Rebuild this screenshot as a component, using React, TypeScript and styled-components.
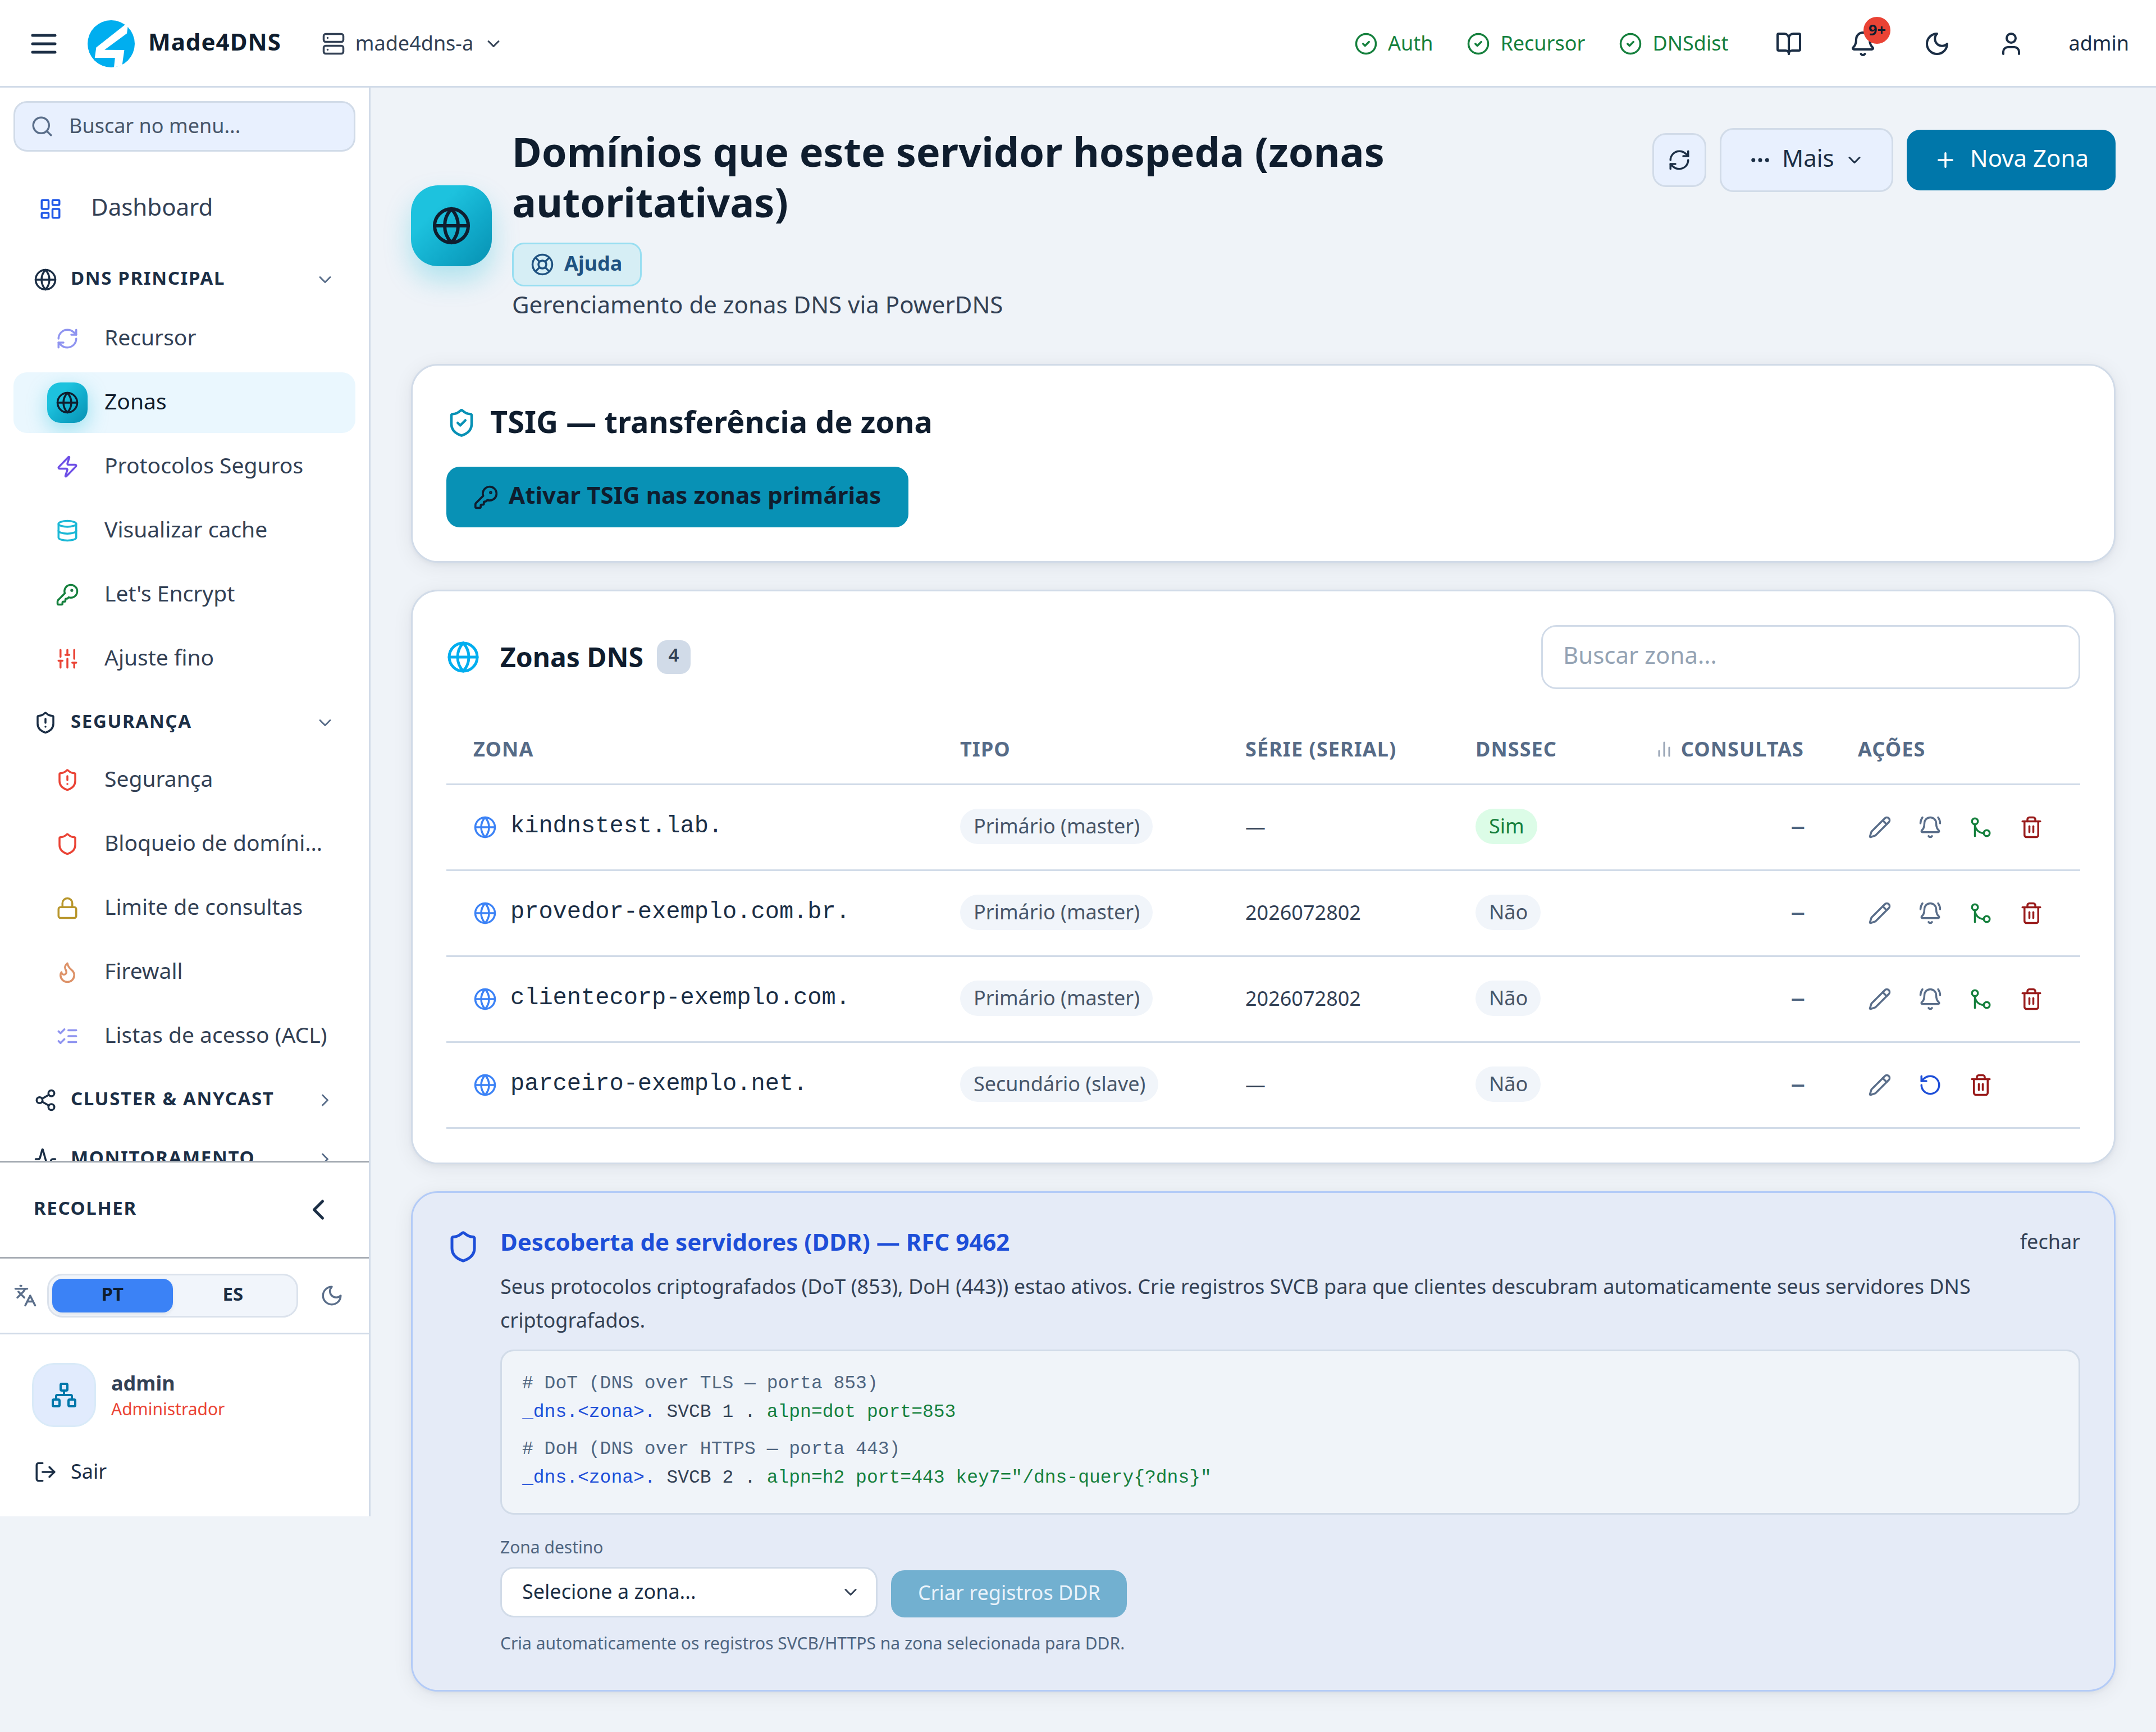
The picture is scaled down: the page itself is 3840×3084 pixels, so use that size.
import React from "react";
import styled, { createGlobalStyle, css } from "styled-components";
import {
    Activity,
    Bell,
    BellRing,
    BookOpen,
    ChevronDown,
    ChevronLeft,
    ChevronRight,
    CircleCheck,
    Database,
    Ellipsis,
    GitMerge,
    Globe,
    KeyRound,
    Languages,
    LayoutDashboard,
    LifeBuoy,
    Lock,
    LogOut,
    Network,
    Pencil,
    Plus,
    RefreshCw,
    RotateCcw,
    Search,
    Server,
    Share2,
    Shield,
    ShieldAlert,
    ShieldCheck,
    SlidersVertical,
    Trash2,
    User,
    Zap,
} from "lucide-react";

const sans = `"Noto Sans", sans-serif`;
const mono = `"Liberation Mono", monospace`;

const ink = "#0f1d2e";
const inkSoft = "#1b2e45";
const text = "#334155";
const muted = "#5a6e8a";
const label = "#4f6580";
const line = "#d1dbe8";
const page = "#eff3f8";
const tint = "#e8f0fe";
const green = "#15803d";
const red = "#ea4335";
const blue = "#1d4ed8";

const GlobalStyle = createGlobalStyle`
    *, *::before, *::after { box-sizing: border-box; }
    body {
        margin: 0;
        background: ${page};
        color: ${text};
        font-family: ${sans};
        font-size: 36px;
    }
    svg { display: block; flex-shrink: 0; }
    h1, h2, h3, p { margin: 0; }
    button, input { font-family: inherit; }
`;

// ---------------------------------------------------------------- icons

interface GlyphProps {
    size: number;
    color?: string;
}

function glyph(...paths: string[]) {
    return function Glyph({ size, color = "currentColor" }: GlyphProps): JSX.Element {
        return (
            <svg
                width={size}
                height={size}
                viewBox="0 0 24 24"
                fill="none"
                stroke={color}
                strokeWidth={2}
                strokeLinecap="round"
                strokeLinejoin="round"
            >
                {paths.map((d) => (
                    <path key={d} d={d} />
                ))}
            </svg>
        );
    };
}

const MenuIcon = glyph("M4 6h16", "M4 12h16", "M4 18h16");
const MoonIcon = glyph("M12 3a6 6 0 0 0 9 9 9 9 0 1 1-9-9Z");
const BarsIcon = glyph("M18 20V10", "M12 20V4", "M6 20v-6");
const ChecksIcon = glyph("m3 17 2 2 4-4", "m3 7 2 2 4-4", "M13 6h8", "M13 12h8", "M13 18h8");
const FlameIcon = glyph(
    "M8.5 14.5A2.5 2.5 0 0 0 11 12c0-1.38-.5-2-1-3-1.072-2.143-.224-4.054 2-6 .5 2.5 2 4.9 4 6.5 2 1.6 3 3.5 3 5.5a7 7 0 1 1-14 0c0-1.153.433-2.294 1-3a2.5 2.5 0 0 0 2.5 2.5z"
);

function Logo(): JSX.Element {
    return (
        <svg width={84} height={84} viewBox="0 0 84 84">
            <circle cx={42} cy={42} r={42} fill="#00aeef" />
            <path
                d="M66.8 7.9 L71.6 11.6 L70 23.4 L30.2 52.8 L65.4 53 L61.6 80 L47 84 L48.8 67 L12.8 67 L15.4 48.4 Z"
                fill="#fff"
            />
        </svg>
    );
}

type IconType = React.ComponentType<any>;

// ---------------------------------------------------------------- text

// caption that sits a bit above the optical middle of its row
const Caption = styled.span<{ $size: number; $lift?: number; $weight?: number; $color?: string; $spacing?: string }>`
    padding-bottom: ${(p) => (p.$lift || 0) * 2}px;
    font-size: ${(p) => p.$size}px;
    font-weight: ${(p) => p.$weight || 400};
    line-height: 1.4;
    white-space: nowrap;
    ${(p) => p.$color && `color: ${p.$color};`}
    ${(p) => p.$spacing && `letter-spacing: ${p.$spacing};`}
`;

// ---------------------------------------------------------------- top bar

const TopBar = styled.header`
    display: flex;
    align-items: center;
    height: 156px;
    padding: 3px 48px 0;
    background: #fff;
    border-bottom: 3px solid ${line};
    color: ${inkSoft};
`;

const Brand = styled.div`
    display: flex;
    align-items: center;
    gap: 24px;
    margin-left: 48px;
`;

const ServerPicker = styled.div`
    display: flex;
    align-items: center;
    gap: 18px;
    margin-left: 72px;
    color: ${text};
`;

const Services = styled.div`
    display: flex;
    gap: 60px;
    margin-left: auto;
    margin-right: 60px;
    color: ${green};
`;

const Service = styled.div`
    display: flex;
    align-items: center;
    gap: 18px;
`;

const BarButtons = styled.div`
    display: flex;
    gap: 36px;
    margin-right: 54px;
`;

const BarButton = styled.div`
    position: relative;
    padding: 24px;
`;

const Counter = styled.span`
    position: absolute;
    top: 0;
    right: -1px;
    display: flex;
    align-items: center;
    justify-content: center;
    width: 48px;
    height: 48px;
    padding-bottom: 4px;
    border-radius: 24px;
    background: ${red};
    color: ${ink};
    font-size: 27px;
    font-weight: 700;
    line-height: 1;
`;

function Header(): JSX.Element {
    return (
        <TopBar>
            <MenuIcon size={60} />
            <Brand>
                <Logo />
                <Caption $size={42} $weight={700} $lift={4} $color={ink} $spacing="0.025em">
                    Made4DNS
                </Caption>
            </Brand>
            <ServerPicker>
                <Server size={42} />
                <Caption $size={36} $lift={1}>
                    made4dns-a
                </Caption>
                <ChevronDown size={36} />
            </ServerPicker>
            <Services>
                {["Auth", "Recursor", "DNSdist"].map((name) => (
                    <Service key={name}>
                        <CircleCheck size={42} />
                        <Caption $size={36} $lift={1}>
                            {name}
                        </Caption>
                    </Service>
                ))}
            </Services>
            <BarButtons>
                <BarButton>
                    <BookOpen size={48} />
                </BarButton>
                <BarButton>
                    <Bell size={48} />
                    <Counter>9+</Counter>
                </BarButton>
                <BarButton>
                    <MoonIcon size={48} />
                </BarButton>
                <BarButton>
                    <User size={48} />
                </BarButton>
            </BarButtons>
            <Caption $size={36} $lift={1}>
                admin
            </Caption>
        </TopBar>
    );
}

// ---------------------------------------------------------------- sidebar

interface NavEntry {
    name: string;
    icon: IconType;
    color: string;
    active?: boolean;
}

interface NavGroup {
    name: string;
    icon: IconType;
    entries?: NavEntry[];
}

const groups: NavGroup[] = [
    {
        name: "DNS PRINCIPAL",
        icon: Globe,
        entries: [
            { name: "Recursor", icon: RefreshCw, color: "#8f94f0" },
            { name: "Zonas", icon: Globe, color: ink, active: true },
            { name: "Protocolos Seguros", icon: Zap, color: "#6d4ee6" },
            { name: "Visualizar cache", icon: Database, color: "#1bb8d6" },
            { name: "Let's Encrypt", icon: KeyRound, color: green },
            { name: "Ajuste fino", icon: SlidersVertical, color: red },
        ],
    },
    {
        name: "SEGURANÇA",
        icon: ShieldAlert,
        entries: [
            { name: "Segurança", icon: ShieldAlert, color: red },
            { name: "Bloqueio de domínios", icon: Shield, color: red },
            { name: "Limite de consultas", icon: Lock, color: "#b8962b" },
            { name: "Firewall", icon: FlameIcon, color: "#dd9268" },
            { name: "Listas de acesso (ACL)", icon: ChecksIcon, color: "#8f94f0" },
        ],
    },
    { name: "CLUSTER & ANYCAST", icon: Share2 },
    { name: "MONITORAMENTO", icon: Activity },
];

const SideBar = styled.aside`
    display: flex;
    flex-direction: column;
    flex-shrink: 0;
    width: 660px;
    height: 2544px;
    background: #fff;
    border-right: 3px solid ${line};
`;

const MenuSearch = styled.div`
    display: flex;
    align-items: center;
    gap: 27px;
    flex-shrink: 0;
    height: 90px;
    margin: 24px 24px 0;
    padding: 0 27px;
    border: 3px solid ${line};
    border-radius: 24px;
    background: ${tint};
    color: ${muted};
`;

const Nav = styled.nav`
    flex: 1;
    min-height: 0;
    overflow: hidden;
    padding: 48px 24px 0;
`;

const NavRow = styled.div<{ $active?: boolean; $top?: boolean }>`
    display: flex;
    align-items: center;
    gap: ${(p) => (p.$top ? 36 : 30)}px;
    height: 108px;
    padding-left: ${(p) => (p.$top ? 30 : 60)}px;
    padding-right: 48px;
    border-radius: 24px;
    overflow: hidden;
    background: ${(p) => (p.$active ? "#eaf7fe" : "transparent")};
    color: ${(p) => (p.$active ? ink : text)};

    ${Caption} {
        min-width: 0;
        overflow: hidden;
        text-overflow: ellipsis;
    }
`;

const gradient = css`
    background: linear-gradient(135deg, #1dc2de 30%, #10a9c9 65%, #0891b2);
`;

const NavIcon = styled.div<{ $active?: boolean }>`
    display: flex;
    align-items: center;
    justify-content: center;
    flex-shrink: 0;
    width: 72px;
    height: 72px;
    border-radius: 24px;
    ${(p) =>
        p.$active &&
        css`
            ${gradient}
            box-shadow: 0 12px 36px rgba(6, 182, 212, 0.35);
        `}
`;

const GroupHead = styled.div`
    display: flex;
    align-items: center;
    gap: 24px;
    height: 90px;
    margin-top: 15px;
    padding: 0 36px;
    color: ${inkSoft};

    ${Caption} {
        flex: 1;
    }
`;

const Entries = styled.div<{ $first: boolean }>`
    display: flex;
    flex-direction: column;
    gap: 6px;
    margin-top: ${(p) => (p.$first ? 6 : 3)}px;
`;

const TopEntry = styled.div`
    margin-bottom: 27px;

    & + ${GroupHead} {
        margin-top: 0;
    }
`;

const Collapse = styled.div`
    display: flex;
    align-items: center;
    justify-content: space-between;
    flex-shrink: 0;
    height: 174px;
    padding: 0 60px;
    border-top: 3px solid #a5abb3;
    border-bottom: 3px solid #a5abb3;
    color: ${inkSoft};
`;

const Preferences = styled.div`
    display: flex;
    align-items: center;
    gap: 18px;
    flex-shrink: 0;
    height: 135px;
    padding: 0 24px;
    border-bottom: 3px solid ${line};
    color: ${muted};
`;

const LanguageSwitch = styled.div`
    display: flex;
    width: 447px;
    height: 78px;
    padding: 6px;
    border: 3px solid #dbe2ec;
    border-radius: 27px;
    background: #f1f5fb;
`;

const Language = styled.div<{ $on?: boolean }>`
    display: flex;
    align-items: center;
    justify-content: center;
    width: 216px;
    border-radius: 18px;
    color: ${(p) => (p.$on ? ink : inkSoft)};
    background: ${(p) => (p.$on ? "#3b82f6" : "transparent")};
    box-shadow: ${(p) => (p.$on ? "0 3px 6px rgba(15, 23, 42, 0.08)" : "none")};
`;

const ThemeButton = styled.div`
    padding: 21px;
`;

const Account = styled.div`
    display: flex;
    flex-direction: column;
    gap: 54px;
    flex: 0 0 324px;
    padding: 51px 57px 0;
    color: ${inkSoft};
`;

const Profile = styled.div`
    display: flex;
    align-items: center;
    gap: 27px;
`;

const Avatar = styled.div`
    display: flex;
    align-items: center;
    justify-content: center;
    width: 114px;
    height: 114px;
    border: 3px solid #d9eaf8;
    border-radius: 39px;
    background: #e1ebfd;
    color: #0077aa;
`;

const Who = styled.div`
    display: flex;
    flex-direction: column;
`;

const SignOut = styled.div`
    display: flex;
    align-items: center;
    gap: 24px;
    padding-left: 3px;
`;

function Entry({ name, icon: Icon, color, active }: NavEntry): JSX.Element {
    return (
        <NavRow $active={active}>
            <NavIcon $active={active}>
                <Icon size={42} color={color} />
            </NavIcon>
            <Caption $size={39} $lift={2.5}>
                {name}
            </Caption>
        </NavRow>
    );
}

function Group({ group, first }: { group: NavGroup; first: boolean }): JSX.Element {
    const Icon = group.icon;
    const Chevron = group.entries ? ChevronDown : ChevronRight;
    return (
        <>
            <GroupHead>
                <Icon size={42} />
                <Caption $size={33} $weight={700} $lift={2.5} $spacing="0.05em">
                    {group.name}
                </Caption>
                <Chevron size={36} color={muted} />
            </GroupHead>
            {group.entries && (
                <Entries $first={first}>
                    {group.entries.map((entry) => (
                        <Entry key={entry.name} {...entry} />
                    ))}
                </Entries>
            )}
        </>
    );
}

function Side(): JSX.Element {
    return (
        <SideBar>
            <MenuSearch>
                <Search size={42} />
                <Caption $size={36} $lift={1} $color="#475569">
                    Buscar no menu...
                </Caption>
            </MenuSearch>
            <Nav>
                <TopEntry>
                    <NavRow $top>
                        <NavIcon>
                            <LayoutDashboard size={42} color="#2159e8" />
                        </NavIcon>
                        <Caption $size={42} $lift={3.5}>
                            Dashboard
                        </Caption>
                    </NavRow>
                </TopEntry>
                {groups.map((group, i) => (
                    <Group key={group.name} group={group} first={i === 0} />
                ))}
            </Nav>
            <Collapse>
                <Caption $size={33} $weight={700} $lift={2.5} $spacing="0.05em">
                    RECOLHER
                </Caption>
                <ChevronLeft size={60} />
            </Collapse>
            <Preferences>
                <Languages size={42} />
                <LanguageSwitch>
                    <Language $on>
                        <Caption $size={33} $weight={700} $lift={3}>
                            PT
                        </Caption>
                    </Language>
                    <Language>
                        <Caption $size={33} $weight={700} $lift={3}>
                            ES
                        </Caption>
                    </Language>
                </LanguageSwitch>
                <ThemeButton>
                    <MoonIcon size={42} />
                </ThemeButton>
            </Preferences>
            <Account>
                <Profile>
                    <Avatar>
                        <Network size={48} />
                    </Avatar>
                    <Who>
                        <Caption $size={36} $weight={700} $color={text}>
                            admin
                        </Caption>
                        <Caption $size={30} $color={red}>
                            Administrador
                        </Caption>
                    </Who>
                </Profile>
                <SignOut>
                    <LogOut size={42} />
                    <Caption $size={36} $lift={1}>
                        Sair
                    </Caption>
                </SignOut>
            </Account>
        </SideBar>
    );
}

// ---------------------------------------------------------------- page heading

const Heading = styled.div`
    display: flex;
    align-items: flex-start;
    height: 348px;
    margin-bottom: 72px;
`;

const HeadingIcon = styled.div`
    display: flex;
    align-items: center;
    justify-content: center;
    align-self: center;
    flex-shrink: 0;
    width: 144px;
    height: 144px;
    margin-right: 36px;
    border-radius: 48px;
    color: ${ink};
    ${gradient}
    box-shadow: 0 24px 48px rgba(6, 182, 212, 0.28);
`;

const HeadingText = styled.div`
    display: flex;
    flex-direction: column;
    align-items: flex-start;
    flex: 1;
`;

const Title = styled.h1`
    max-width: 1800px;
    height: 204px;
    margin-top: -4px;
    color: ${ink};
    font-size: 72px;
    font-weight: 700;
    line-height: 90px;
`;

const HelpButton = styled.div`
    display: flex;
    align-items: center;
    gap: 18px;
    width: 231px;
    height: 78px;
    margin-top: 4px;
    padding: 0 30px;
    border: 3px solid #98def1;
    border-radius: 21px;
    background: #d6eef5;
    color: #1f5280;
`;

const Subtitle = styled.p`
    font-size: 42px;
    line-height: 63px;
`;

const Actions = styled.div`
    display: flex;
    align-items: center;
    gap: 24px;
`;

const Button = styled.div<{ $kind?: "primary" | "cyan" | "faded"; $height?: number; $gap?: number }>`
    display: inline-flex;
    align-items: center;
    gap: ${(p) => p.$gap || 18}px;
    height: ${(p) => p.$height || 108}px;
    padding: 0 48px;
    border-radius: 24px;
    background: #0077aa;
    color: #fff;

    ${(p) =>
        p.$kind === "cyan" &&
        css`
            background: #0891b5;
            color: ${ink};
        `}
    ${(p) =>
        p.$kind === "faded" &&
        css`
            padding-right: 47px;
            background: #72b0d0;
            color: #eaf3fb;
        `}
`;

const OutlineButton = styled(Button)`
    border: 3px solid ${line};
    background: ${tint};
    color: ${inkSoft};
`;

const SquareButton = styled(OutlineButton)`
    justify-content: center;
    width: 96px;
    padding: 0;
`;

function PageHeading(): JSX.Element {
    return (
        <Heading>
            <HeadingIcon>
                <Globe size={72} />
            </HeadingIcon>
            <HeadingText>
                <Title>Domínios que este servidor hospeda (zonas autoritativas)</Title>
                <HelpButton>
                    <LifeBuoy size={42} />
                    <Caption $size={36} $weight={700} $lift={1.5}>
                        Ajuda
                    </Caption>
                </HelpButton>
                <Subtitle>Gerenciamento de zonas DNS via PowerDNS</Subtitle>
            </HeadingText>
            <Actions>
                <SquareButton $height={96}>
                    <RefreshCw size={42} />
                </SquareButton>
                <OutlineButton $height={114}>
                    <Ellipsis size={42} />
                    <Caption $size={42} $lift={3.5}>
                        Mais
                    </Caption>
                    <ChevronDown size={36} />
                </OutlineButton>
                <Button $gap={23}>
                    <Plus size={42} />
                    <Caption $size={42} $lift={3.5}>
                        Nova Zona
                    </Caption>
                </Button>
            </Actions>
        </Heading>
    );
}

// ---------------------------------------------------------------- cards

const Card = styled.section`
    margin-bottom: 48px;
    padding: 60px;
    border: 3px solid ${line};
    border-radius: 48px;
    background: #fff;
    box-shadow: 0 6px 36px rgba(15, 29, 46, 0.07), 0 3px 9px rgba(15, 29, 46, 0.05);
`;

const CardTitle = styled.h2`
    display: flex;
    align-items: center;
    gap: 24px;
    height: 84px;
    margin-bottom: 36px;
    color: ${ink};
`;

function TsigCard(): JSX.Element {
    return (
        <Card>
            <CardTitle>
                <ShieldCheck size={54} color="#0891b5" />
                <Caption $size={54} $weight={700} $lift={2.5} $spacing="0.001em">
                    TSIG — transferência de zona
                </Caption>
            </CardTitle>
            <Button $kind="cyan">
                <KeyRound size={45} />
                <Caption $size={42} $weight={700} $lift={4} $spacing="0.0018em">
                    Ativar TSIG nas zonas primárias
                </Caption>
            </Button>
        </Card>
    );
}

interface Zone {
    name: string;
    secondary?: boolean;
    serial: string;
    dnssec: boolean;
}

const zones: Zone[] = [
    { name: "kindnstest.lab.", serial: "—", dnssec: true },
    { name: "provedor-exemplo.com.br.", serial: "2026072802", dnssec: false },
    { name: "clientecorp-exemplo.com.", serial: "2026072802", dnssec: false },
    { name: "parceiro-exemplo.net.", secondary: true, serial: "—", dnssec: false },
];

const ZonesHead = styled.div`
    display: flex;
    align-items: center;
    height: 114px;
    margin-bottom: 48px;
    color: ${ink};
`;

const ZonesTitle = styled.h2`
    display: flex;
    margin-left: 36px;
`;

const Count = styled.span`
    display: flex;
    align-items: center;
    justify-content: center;
    width: 60px;
    height: 60px;
    margin-left: 24px;
    border-radius: 18px;
    background: ${line};
    color: ${text};
`;

const ZoneSearch = styled.input`
    width: 960px;
    height: 114px;
    margin-left: auto;
    padding: 0 36px 9px;
    border: 3px solid ${line};
    border-radius: 27px;
    background: #fff;
    font-size: 42px;

    &::placeholder {
        color: #94a3b4;
        opacity: 1;
    }
`;

const Row = styled.div<{ $head?: boolean }>`
    display: grid;
    grid-template-columns: 867px 508px 410px 318px 363px 444px;
    align-items: center;
    height: ${(p) => (p.$head ? 123 : 153)}px;
    border-bottom: 3px solid ${line};
    ${(p) =>
        p.$head &&
        css`
            padding-bottom: 3px;
            color: #566b87;
            font-weight: 700;
            letter-spacing: 0.03em;
        `}
`;

const Cell = styled.div<{ $end?: boolean; $gap?: number }>`
    display: flex;
    align-items: center;
    justify-content: ${(p) => (p.$end ? "flex-end" : "flex-start")};
    gap: ${(p) => p.$gap || 0}px;
    padding: 0 48px;
    white-space: nowrap;
`;

const ZoneName = styled.span`
    padding-bottom: 4px;
    color: ${inkSoft};
    font-family: ${mono};
    font-size: 42px;
`;

const Pill = styled.span<{ $on?: boolean }>`
    height: 63px;
    margin-bottom: 3px;
    padding: 0 23px 0 24px;
    border-radius: 32px;
    background: ${(p) => (p.$on ? "#dcfce7" : "#f1f5fa")};
    color: ${(p) => (p.$on ? green : "#475569")};
    line-height: 62px;
`;

const Serial = styled.span`
    padding-bottom: 3px;
`;

const Queries = styled.span`
    padding-top: 2px;
    color: ${label};
    font-family: ${mono};
    font-weight: 700;
`;

const Faint = styled.span`
    opacity: 0.6;
`;

const RowAction = styled.span`
    padding: 18px;
`;

function ZoneRow({ zone }: { zone: Zone }): JSX.Element {
    return (
        <Row>
            <Cell $gap={24}>
                <Globe size={42} color="#3b82f6" />
                <ZoneName>{zone.name}</ZoneName>
            </Cell>
            <Cell>
                <Pill>{zone.secondary ? "Secundário (slave)" : "Primário (master)"}</Pill>
            </Cell>
            <Cell>
                <Serial>{zone.serial}</Serial>
            </Cell>
            <Cell>
                <Pill $on={zone.dnssec}>{zone.dnssec ? "Sim" : "Não"}</Pill>
            </Cell>
            <Cell $end>
                <Queries>—</Queries>
            </Cell>
            <Cell $gap={12}>
                <RowAction>
                    <Pencil size={42} color={muted} />
                </RowAction>
                <RowAction>
                    {zone.secondary ? <RotateCcw size={42} color={blue} /> : <BellRing size={42} color={muted} />}
                </RowAction>
                {!zone.secondary && (
                    <RowAction>
                        <GitMerge size={42} color={green} />
                    </RowAction>
                )}
                <RowAction>
                    <Trash2 size={42} color="#991b1b" />
                </RowAction>
            </Cell>
        </Row>
    );
}

function ZonesCard(): JSX.Element {
    return (
        <Card>
            <ZonesHead>
                <Globe size={60} color="#00aeef" />
                <ZonesTitle>
                    <Caption $size={48} $weight={700}>
                        Zonas DNS
                    </Caption>
                </ZonesTitle>
                <Count>
                    <Caption $size={33} $weight={600} $lift={3.5}>
                        {zones.length}
                    </Caption>
                </Count>
                <ZoneSearch placeholder="Buscar zona..." />
            </ZonesHead>
            <Row $head>
                <Cell>ZONA</Cell>
                <Cell>TIPO</Cell>
                <Cell>SÉRIE (SERIAL)</Cell>
                <Cell>DNSSEC</Cell>
                <Cell $end $gap={12}>
                    <Faint>
                        <BarsIcon size={36} />
                    </Faint>
                    CONSULTAS
                </Cell>
                <Cell>AÇÕES</Cell>
            </Row>
            {zones.map((zone) => (
                <ZoneRow key={zone.name} zone={zone} />
            ))}
        </Card>
    );
}

const DiscoveryBox = styled(Card)`
    display: flex;
    gap: 36px;
    height: 891px;
    margin-bottom: 0;
    border-color: #b3cbf7;
    background: #e5ebf7;
`;

const ShieldSlot = styled.div`
    padding-top: 6px;
    color: ${blue};
`;

const Discovery = styled.div`
    flex: 1;
`;

const DiscoveryHead = styled.div`
    display: flex;
    justify-content: space-between;
    height: 77px;
    line-height: 53px;
`;

const DiscoveryTitle = styled.h3`
    color: ${blue};
    font-size: 42px;
    font-weight: 700;
`;

const Description = styled.p`
    max-width: 2700px;
    line-height: 60px;
`;

const Code = styled.div`
    height: 294px;
    margin-top: 22px;
    padding: 32px 36px 0;
    border: 3px solid ${line};
    border-radius: 24px;
    background: #f0f4f9;
    color: ${text};
    font-family: ${mono};
    font-size: 33px;
    line-height: 51px;
`;

const CodeBlock = styled.div`
    & + & {
        margin-top: 15px;
    }
`;

const Comment = styled.div`
    color: ${label};
`;

const Host = styled.span`
    color: ${blue};
`;

const Params = styled.span`
    color: ${green};
`;

const FieldLabel = styled.div`
    margin: 35px 0 13px;
    color: ${label};
    font-size: 30px;
    line-height: 45px;
`;

const Form = styled.div`
    display: flex;
    align-items: flex-end;
    gap: 24px;
`;

const Select = styled.div`
    display: flex;
    align-items: center;
    justify-content: space-between;
    width: 672px;
    height: 90px;
    padding: 0 27px 0 36px;
    border: 3px solid ${line};
    border-radius: 24px;
    background: #fff;
    color: ${inkSoft};
`;

const Hint = styled.p`
    margin-top: 23px;
    color: ${label};
    font-size: 30px;
    line-height: 45px;
`;

const records = [
    { comment: "# DoT (DNS over TLS — porta 853)", value: " SVCB 1 . ", params: "alpn=dot port=853" },
    {
        comment: "# DoH (DNS over HTTPS — porta 443)",
        value: " SVCB 2 . ",
        params: `alpn=h2 port=443 key7="/dns-query{?dns}"`,
    },
];

function DiscoveryCard(): JSX.Element {
    return (
        <DiscoveryBox>
            <ShieldSlot>
                <Shield size={60} />
            </ShieldSlot>
            <Discovery>
                <DiscoveryHead>
                    <DiscoveryTitle>Descoberta de servidores (DDR) — RFC 9462</DiscoveryTitle>
                    <span>fechar</span>
                </DiscoveryHead>
                <Description>
                    Seus protocolos criptografados (DoT (853), DoH (443)) estao ativos. Crie registros SVCB para que
                    clientes descubram automaticamente seus servidores DNS criptografados.
                </Description>
                <Code>
                    {records.map((record) => (
                        <CodeBlock key={record.comment}>
                            <Comment>{record.comment}</Comment>
                            <Host>{"_dns.<zona>."}</Host>
                            {record.value}
                            <Params>{record.params}</Params>
                        </CodeBlock>
                    ))}
                </Code>
                <FieldLabel>Zona destino</FieldLabel>
                <Form>
                    <Select>
                        <Caption $size={36} $lift={1}>
                            Selecione a zona...
                        </Caption>
                        <ChevronDown size={36} color={text} />
                    </Select>
                    <Button $kind="faded" $height={84}>
                        <Caption $size={36} $lift={1.5}>
                            Criar registros DDR
                        </Caption>
                    </Button>
                </Form>
                <Hint>Cria automaticamente os registros SVCB/HTTPS na zona selecionada para DDR.</Hint>
            </Discovery>
        </DiscoveryBox>
    );
}

// ---------------------------------------------------------------- app

const Body = styled.div`
    display: flex;
    align-items: flex-start;
`;

const Main = styled.main`
    flex: 1;
    min-width: 0;
    padding: 72px;
`;

export default function App(): JSX.Element {
    return (
        <>
            <GlobalStyle />
            <Header />
            <Body>
                <Side />
                <Main>
                    <PageHeading />
                    <TsigCard />
                    <ZonesCard />
                    <DiscoveryCard />
                </Main>
            </Body>
        </>
    );
}
